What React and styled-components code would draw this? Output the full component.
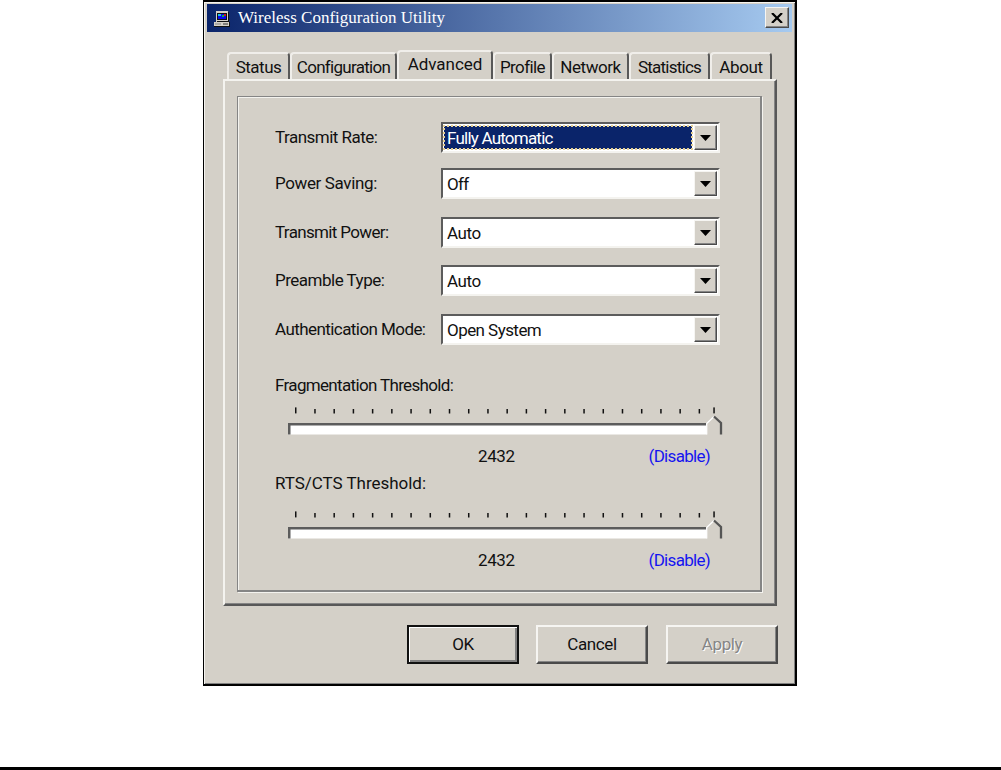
import React from 'react';
import styled, { createGlobalStyle, css } from 'styled-components';

const tabs = [
    { label: 'Status', width: 63, ls: -0.5 },
    { label: 'Configuration', width: 107, ls: -0.7 },
    { label: 'Advanced', width: 96, ls: -0.05, active: true },
    { label: 'Profile', width: 59, ls: -0.6 },
    { label: 'Network', width: 77, ls: -0.45 },
    { label: 'Statistics', width: 81, ls: -0.75 },
    { label: 'About', width: 62, ls: -0.4 },
];

const fields = [
    { label: 'Transmit Rate:', ls: -0.52, value: 'Fully Automatic', valueLs: -0.78, gap: 15, selected: true },
    { label: 'Power Saving:', ls: -0.37, value: 'Off', valueLs: -0.7, gap: 18 },
    { label: 'Transmit Power:', ls: -0.65, value: 'Auto', valueLs: -0.45, gap: 17 },
    { label: 'Preamble Type:', ls: -0.5, value: 'Auto', valueLs: -0.45, gap: 18 },
    { label: 'Authentication Mode:', ls: -0.57, value: 'Open System', valueLs: -0.55, gap: 0 },
];

const thresholds = [
    { label: 'Fragmentation Threshold:', ls: -0.66, value: '2432', top: 25, sliderGap: 12 },
    { label: 'RTS/CTS Threshold:', ls: -0.03, value: '2432', top: 0, sliderGap: 18 },
];

const ticks = Array.from({ length: 23 }, (_, i) => (i === 22 ? 425.3 : 7 + i * 19.22));

const Slider = ({ gap }) => (
    <SliderDrawing viewBox="0 0 440 30" $gap={gap}>
        {ticks.map((x, i) => (
            <rect
                key={i}
                x={x}
                y={i === 0 || i === 22 ? 0.4 : 2}
                width="1.5"
                height={i === 0 || i === 22 ? 6 : 4.5}
                fill="#111"
            />
        ))}
        <rect x="0" y="16" width="419" height="11.500" fill="#fff" />
        <path d="M0 27.500V16H419V18.500H2.500V27.500Z" fill="#5c5c5c" />
        <path d="M418 27.500V17L426 9L434 17V27.500Z" fill="#d4d0c8" />
        <path d="M418.700 27.500V16.500L426 9.500" fill="none" stroke="#fff" strokeWidth="1.3" />
        <path d="M426 9.500L433 16V27.500" fill="none" stroke="#555" strokeWidth="2.3" />
    </SliderDrawing>
);

const App = () => (
    <Page>
        <GlobalStyle />
        <Window>
            <TitleBar>
                <ComputerIcon viewBox="0 0 18 16">
                    <path d="M3 0H15V11H3Z" fill="#d4d0c8" />
                    <path d="M15 1H16V11H4V10H15Z" fill="#111" />
                    <rect x="4" y="2" width="10" height="7" fill="#111" />
                    <rect x="5" y="3" width="8" height="5" fill="#0808f0" />
                    <rect x="5" y="3" width="3" height="2" fill="#18c0e8" />
                    <rect x="9" y="4" width="2" height="2" fill="#18b040" />
                    <rect x="11" y="3" width="2" height="2" fill="#c82020" />
                    <path d="M1 11H16V15H1Z" fill="#d4d0c8" />
                    <path d="M1 15H16V11H17V16H1Z" fill="#111" />
                    <path d="M2 13H8" stroke="#808080" />
                    <path d="M10 13H15" stroke="#333" />
                </ComputerIcon>
                <Title>Wireless Configuration Utility</Title>
                <CloseButton>
                    <svg width="12" height="10" viewBox="0 0 12 10">
                        <path d="M1 0L11 10M11 0L1 10" stroke="#000" strokeWidth="2.2" />
                    </svg>
                </CloseButton>
            </TitleBar>
            <TabStrip>
                {tabs.map(({ label, width, ls, active }) => (
                    <Tab key={label} $width={width} $ls={ls} $active={active}>{label}</Tab>
                ))}
            </TabStrip>
            <TabPanel>
                <GroupBox>
                    {fields.map(({ label, ls, value, valueLs, gap, selected }) => (
                        <Field key={label} $gap={gap}>
                            <Label $ls={ls}>{label}</Label>
                            <Combo>
                                <ComboValue $selected={selected} $ls={valueLs}>{value}</ComboValue>
                                <DropButton>
                                    <svg width="11" height="6" viewBox="0 0 11 6">
                                        <path d="M0 0H11L5.500 6Z" fill="#000" />
                                    </svg>
                                </DropButton>
                            </Combo>
                        </Field>
                    ))}
                    {thresholds.map(({ label, ls, value, top, sliderGap }) => (
                        <Threshold key={label} $top={top}>
                            <Label $ls={ls}>{label}</Label>
                            <Slider gap={sliderGap} />
                            <Readout>
                                <Value>{value}</Value>
                                <State>(Disable)</State>
                            </Readout>
                        </Threshold>
                    ))}
                </GroupBox>
            </TabPanel>
            <Footer>
                <Button $primary>OK</Button>
                <Button>Cancel</Button>
                <Button $disabled>Apply</Button>
            </Footer>
        </Window>
        <PageRule />
    </Page>
);

const GlobalStyle = createGlobalStyle`
    * { box-sizing: border-box; }
    body {
        margin: 0;
        background: #fff;
    }
`
const raised = css`
    border: 1px solid;
    border-color: #f6f5f2 #4a4a4a #4a4a4a #f6f5f2;
    box-shadow: inset -1px -1px 0 #858585;
`
const Page = styled.div`
    display: flex;
    flex-direction: column;
    align-items: center;
    justify-content: space-between;
    width: 1001px;
    height: 770px;
    padding-right: 1px;
    overflow: hidden;
    font-family: Roboto, "Liberation Sans", sans-serif;
    font-size: 17px;
    line-height: 20px;
    color: #111;
    white-space: nowrap;
`
const Window = styled.div`
    width: 594px;
    height: 686px;
    padding: 2px 2px 0 3px;
    border: 1px solid #000;
    border-width: 2px 2px 2px 1px;
    background: #d4d0c8;
    box-shadow: inset 1px 1px 0 #f4f3ef, inset -1px -1px 0 #808080;
`
const TitleBar = styled.div`
    display: flex;
    align-items: center;
    width: 585px;
    height: 28px;
    padding: 0 3px 1px 6px;
    background: linear-gradient(to right, #0a246a, #a6caf0);
`
const ComputerIcon = styled.svg`
    width: 18px;
    height: 16px;
    margin-top: 3px;
`
const Title = styled.div`
    flex: 1;
    margin: 1px 0 0 7px;
    font: 17px/20px "Liberation Serif", serif;
    color: #fff;
`
const CloseButton = styled.div`
    ${raised}
    display: flex;
    align-items: center;
    justify-content: center;
    width: 24px;
    height: 21px;
    background: #d4d0c8;
`
const TabStrip = styled.div`
    display: flex;
    align-items: flex-end;
    height: 47px;
    padding-left: 20px;
`
const Tab = styled.div`
    width: ${({ $width }) => $width}px;
    height: ${({ $active }) => ($active ? 29 : 27)}px;
    padding-top: ${({ $active }) => ($active ? 2 : 3)}px;
    border: 2px solid #f0eeea;
    border-right-color: #585858;
    border-bottom: none;
    border-radius: 4px 4px 0 0;
    text-align: center;
    letter-spacing: ${({ $ls }) => $ls}px;
`
const TabPanel = styled.div`
    width: 554px;
    height: 527px;
    margin-left: 16px;
    padding: 15px 0 0 12px;
    border: 2px solid;
    border-color: #f4f3ef #585858 #585858 #f4f3ef;
    box-shadow: inset -1px -1px 0 #858585;
`
const GroupBox = styled.div`
    width: 525px;
    height: 496px;
    padding: 25px 0 0 37px;
    border: 1px solid #858585;
    border-right-width: 2px;
    border-bottom-width: 2px;
    box-shadow: inset 1px 1px 0 #f4f3ef, 1px 1px 0 #f4f3ef;
`
const Field = styled.div`
    display: flex;
    height: 31px;
    margin-bottom: ${({ $gap }) => $gap}px;
`
const Label = styled.div`
    width: 166px;
    padding-top: 5px;
    letter-spacing: ${({ $ls }) => $ls}px;
`
const Combo = styled.div`
    display: flex;
    width: 279px;
    height: 31px;
    padding: 1px;
    border: 2px solid;
    border-color: #5c5c5c #f4f3ef #f4f3ef #5c5c5c;
    background: #fff;
`
const ComboValue = styled.div`
    flex: 1;
    margin: 1px 2px 1px 0;
    padding: 2px 0 0 3px;
    letter-spacing: ${({ $ls }) => $ls}px;
    ${({ $selected }) => $selected && css`
        background: #0a246a;
        color: #fff;
        outline: 2px dotted #e3cf95;
        outline-offset: -1px;
    `}
`
const DropButton = styled.div`
    ${raised}
    display: flex;
    align-items: center;
    justify-content: center;
    width: 23px;
    background: #d4d0c8;
`
const Threshold = styled.div`
    height: 98px;
    margin-top: ${({ $top }) => $top}px;
`
const SliderDrawing = styled.svg`
    display: block;
    width: 440px;
    height: 30px;
    margin: ${({ $gap }) => $gap}px 0 0 13px;
`
const Readout = styled.div`
    display: flex;
    justify-content: space-between;
    width: 232px;
    margin: 9px 0 0 203px;
`
const Value = styled.span`
    letter-spacing: -0.4px;
`
const State = styled.span`
    color: #1414f0;
    letter-spacing: -0.7px;
`
const Footer = styled.div`
    display: flex;
    gap: 17px;
    margin: 19px 0 0 200px;
`
const Button = styled.div`
    ${raised}
    width: 112px;
    height: 39px;
    padding-top: 7px;
    text-align: center;
    letter-spacing: -0.4px;
    border-width: 2px;
    ${({ $primary }) => $primary && css`
        border-color: #111;
        box-shadow: inset 1px 1px 0 #fff, inset -2px -2px 0 #808080;
    `}
    ${({ $disabled }) => $disabled && css`
        margin-left: 1px;
        color: #858585;
        text-shadow: 1px 1px 0 #fff;
    `}
`
const PageRule = styled.div`
    width: 1001px;
    height: 3px;
    margin-right: -1px;
    background: #000;
`

export default App;
